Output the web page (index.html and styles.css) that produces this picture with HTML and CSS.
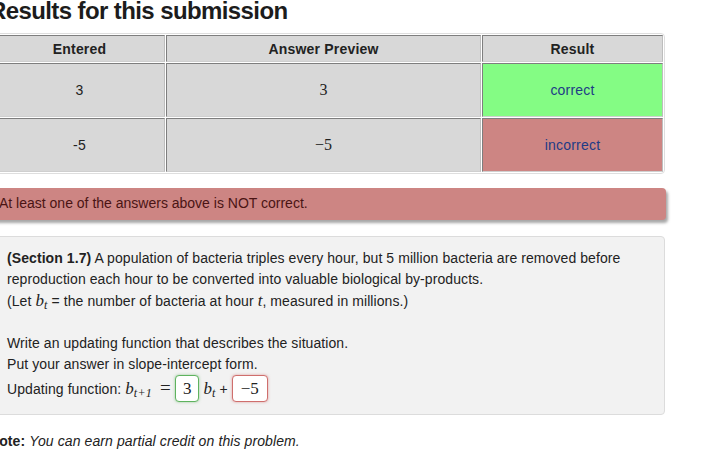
FILE: index.html
```html
<!DOCTYPE html>
<html lang="en">
<head>
<meta charset="utf-8">
<title>Results for this submission</title>
<link rel="stylesheet" href="styles.css">
</head>
<body>
<div class="page">
  <h2 class="title">Results for this submission</h2>
  <table class="results">
    <colgroup><col class="c1"><col class="c2"><col class="c3"></colgroup>
    <thead>
      <tr><th>Entered</th><th>Answer Preview</th><th>Result</th></tr>
    </thead>
    <tbody>
      <tr><td>3</td><td class="math">3</td><td class="ok">correct</td></tr>
      <tr><td>-5</td><td class="math">&minus;5</td><td class="bad">incorrect</td></tr>
    </tbody>
  </table>
  <div class="alert">At least one of the answers above is NOT correct.</div>
  <div class="problem">
    <b>(Section 1.7)</b> A population of bacteria triples every hour, but 5 million bacteria are removed before reproduction each hour to be converted into valuable biological by-products.<br>
    (Let <span class="mi">b</span><sub class="ms">t</sub> = the number of bacteria at hour <span class="mi">t</span>, measured in millions.)<br>
    <br>
    Write an updating function that describes the situation.<br>
    Put your answer in slope-intercept form.<br>
    Updating function: <span class="mi">b</span><sub class="ms">t+1</sub><span class="mo">=</span><span class="answer good">3</span> <span class="mi">b</span><sub class="ms">t</sub> + <span class="answer wrong">&minus;5</span>
  </div>
  <p class="note"><b>Note:</b> <i>You can earn partial credit on this problem.</i></p>
</div>
</body>
</html>
```

FILE: styles.css
```css
* { box-sizing: border-box; }
html, body { margin: 0; padding: 0; background: #fff; }
body {
  width: 720px;
  height: 452px;
  overflow: hidden;
  font-family: "Liberation Sans", Arial, sans-serif;
  color: #222;
}
.page {
  margin-left: -11px;
  width: 677px;
}
.title {
  margin: 0 0 11px 0;
  font-size: 24px;
  line-height: 22px;
  font-weight: 700;
  letter-spacing: -0.6px;
  color: #1c1c1c;
}
.results {
  margin-left: 3px;
  width: 673px;
  table-layout: fixed;
  border-collapse: separate;
  border-spacing: 1px;
  border: 1px solid #dedede;
  border-radius: 4px;
  font-size: 14px;
  letter-spacing: 0.2px;
}
.c1 { width: 171px; }
.c2 { width: 315px; }
.c3 { width: 181px; }
.results th, .results td {
  padding: 0;
  text-align: center;
  background: #d8d8d8;
  border-top: 1px solid #7e7e7e;
  border-left: 1px solid #7e7e7e;
  border-right: 1px solid #bdbdbd;
  border-bottom: 1px solid #cfcfcf;
}
.results th {
  height: 27px;
  font-weight: 700;
  color: #222;
}
.results td { height: 54px; }
.results td.math {
  font-family: "Liberation Serif", "Times New Roman", serif;
  font-size: 16px;
  letter-spacing: 0;
}
.results td.ok { background: #84fc84; color: #1e3b86; }
.results td.bad { background: #cd8583; color: #1e3b86; }
.alert {
  margin-top: 14px;
  height: 32px;
  line-height: 31px;
  padding: 0 10px;
  font-size: 14px;
  color: #4a1414;
  background: #cd8583;
  border-radius: 4px;
  box-shadow: 2px 3px 3px rgba(0, 0, 0, 0.35);
}
.problem {
  margin-top: 16px;
  width: 676px;
  padding: 11px 16px 12px 17px;
  background: #f2f2f2;
  border: 1px solid #dcdcdc;
  border-radius: 4px;
  font-size: 14px;
  line-height: 21px;
  letter-spacing: 0.08px;
  color: #222;
}
.mi {
  font-family: "Liberation Serif", "Times New Roman", serif;
  font-style: italic;
  font-size: 17px;
  letter-spacing: 0;
}
.mo {
  font-family: "Liberation Serif", "Times New Roman", serif;
  font-size: 19px;
  margin: 0 4px 0 8px;
}
.ms {
  font-family: "Liberation Serif", "Times New Roman", serif;
  font-style: italic;
  font-size: 12px;
  letter-spacing: 0.3px;
  line-height: 0;
  vertical-align: -3px;
}
.answer {
  display: inline-block;
  height: 27px;
  line-height: 25px;
  padding: 0 7px;
  font-family: "Liberation Serif", "Times New Roman", serif;
  font-size: 17px;
  letter-spacing: 0;
  color: #222;
  background: #fff;
  border-radius: 4px;
}
.answer.good {
  border: 1px solid #5fb35f;
  box-shadow: 0 0 3px rgba(80, 170, 80, 0.55);
}
.answer.wrong {
  padding: 0 8px;
  border: 1px solid #cf6f6d;
  box-shadow: 0 0 3px rgba(205, 95, 95, 0.55);
}
.note {
  margin: 16px 0 0 0;
  font-size: 14px;
  line-height: 21px;
  letter-spacing: 0.1px;
  color: #222;
}
```
